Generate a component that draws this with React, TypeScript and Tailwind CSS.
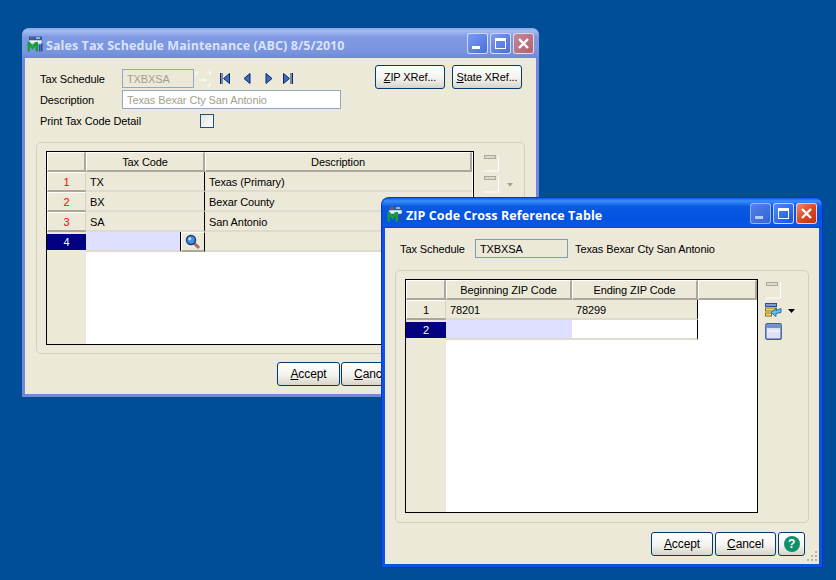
import type { ReactNode } from 'react';

const Btn = ({ hot, rest, w, small }: { hot: string; rest: string; w: string; small?: boolean }) => (
  <div className={`${w} h-[24px] flex items-center justify-center whitespace-pre border border-[#003c74] rounded-[3px] bg-[linear-gradient(#ffffff,#f4f3ee_55%,#d8d4c8)] text-black ${small ? 'text-[11px]' : 'text-[12px]'}`}>
    <span className="underline">{hot}</span>
    {rest}
  </div>
);

const CaptionBtn = ({ kind, active }: { kind: 'min' | 'max' | 'close'; active: boolean }) => {
  const bg =
    kind === 'close'
      ? active
        ? 'bg-[linear-gradient(135deg,#ec8a6c,#d8471e_55%,#c03410)]'
        : 'bg-[linear-gradient(135deg,#c08a9c,#b4606c)]'
      : kind === 'min' && active
        ? 'bg-[linear-gradient(135deg,#6e92e8,#4a6cd4)] opacity-70'
        : active
          ? 'bg-[linear-gradient(135deg,#4f8cf5,#1a54dc)]'
          : 'bg-[linear-gradient(135deg,#7a9cf0,#4a6edc)]';
  return (
    <div className={`w-[21px] h-[21px] rounded-[3px] border border-white/70 flex items-center justify-center ${bg}`}>
      {kind === 'min' && <div className="w-[8px] h-[3px] mt-[8px] mr-[3px] bg-white" />}
      {kind === 'max' && <div className="w-[11px] h-[11px] border border-white border-t-[3px]" />}
      {kind === 'close' && (
        <svg width="13" height="13" viewBox="0 0 13 13">
          <path d="M2 2l9 9M11 2l-9 9" stroke="#fff" strokeWidth="2.4" />
        </svg>
      )}
    </div>
  );
};

const AppIcon = () => (
  <svg width="16" height="16" viewBox="0 0 16 16" className="shrink-0 mt-[1px]">
    <rect x="2" y="0.5" width="13" height="4" fill="#1f5fa8" />
    <rect x="3" y="1.5" width="4" height="1" fill="#d84a3a" />
    <rect x="9" y="1.5" width="4" height="1" fill="#fff" />
    <rect x="2" y="4" width="13" height="4" fill="#e8eef8" stroke="#3a68a8" strokeWidth="0.5" />
    <path d="M0.5 15.5V6h2.500l2.500 4 2.500-4H11v9.500H8.500V10L5.500 14 2.800 10v5.500z" fill="#16a02c" />
    <rect x="12" y="9" width="1.500" height="6.500" fill="#2a4ca0" />
    <rect x="14" y="7.500" width="1.500" height="8" fill="#2a4ca0" />
  </svg>
);

const Window = ({ title, active, pos, children }: { title: string; active: boolean; pos: string; children: ReactNode }) => (
  <div
    className={`absolute ${pos} flex flex-col rounded-t-[7px] ${
      active ? 'bg-[#0a54e0] shadow-[0_0_0_1px_#0831d9]' : 'bg-[#7186dc]'
    }`}
  >
    <div
      className={`h-[30px] flex items-center pl-[5px] pr-[5px] rounded-t-[7px] ${
        active
          ? 'bg-[linear-gradient(#0a5ce8,#3d90f8_10%,#0a5ae4_28%,#0452e0_70%,#0a58e8_92%,#0344c8)]'
          : 'bg-[linear-gradient(#8aa4e8,#a4bcf0_10%,#7f9ae2_30%,#7a94e0_80%,#6e88d8)]'
      }`}
    >
      <AppIcon />
      <span
        className={`ml-[3px] pt-[6px] text-[12.5px] tracking-[0.08px] font-bold font-['Open_Sans',sans-serif] ${
          active ? 'text-white' : 'text-[#d8e4f8]'
        }`}
      >
        {title}
      </span>
      <div className="ml-auto flex gap-[2px]">
        <CaptionBtn kind="min" active={active} />
        <CaptionBtn kind="max" active={active} />
        <CaptionBtn kind="close" active={active} />
      </div>
    </div>
    <div className="mx-[3px] mb-[3px] flex-1 bg-[#ece9d8] relative flex flex-col">{children}</div>
  </div>
);

const Nav = ({ d, cls = '' }: { d: string; cls?: string }) => (
  <svg width="12" height="13" viewBox="0 0 12 13" className={cls}>
    <path d={d} fill="#3a6cc0" stroke="#0a2a6c" strokeWidth="1" />
  </svg>
);

const HeadCell = ({ w, children }: { w: string; children?: ReactNode }) => (
  <div className={`${w} h-[20px] pt-[1px] shrink-0 flex items-center justify-center bg-[#ece9d8] border-t border-l border-t-white border-l-white border-b-2 border-r-2 border-b-[#aca899] border-r-[#aca899]`}>
    {children}
  </div>
);

const RowNo = ({ n, red, cur }: { n: number; red?: boolean; cur?: boolean }) => (
  <div
    className={`h-[20px] pt-[1px] flex items-center justify-center ${
      cur
        ? 'bg-[#000080] text-white border-2 border-[#ece9d8] border-r-0 border-l-0'
        : `bg-[#ece9d8] border-t border-l border-white border-b-2 border-b-[#aca899] border-r border-r-[#d6d2c2] ${red ? 'text-[#ff0000]' : 'text-black'}`
    }`}
  >
    {n}
  </div>
);

const Cell = ({ w, bg = 'bg-[#ece9d8]', line, children }: { w: string; bg?: string; line?: boolean; children?: ReactNode }) => (
  <div className={`${w} h-[20px] shrink-0 flex items-center pl-[4px] pt-[2px] ${bg} border-b-2 border-b-[#dedbcf] ${line ? 'border-r border-r-black' : ''}`}>
    {children}
  </div>
);

const Disabled = () => (
  <svg width="17" height="17" viewBox="0 0 17 17">
    <rect x="1.500" y="0.500" width="11" height="3" fill="#dcd9cc" stroke="#aca899" />
    <path d="M15.500 1v15H1" fill="none" stroke="#fff" strokeWidth="1" />
  </svg>
);

const Lookup = () => (
  <svg width="16" height="16" viewBox="0 0 16 16">
    <path d="M9 9l5 5" stroke="#a06a70" strokeWidth="3" />
    <circle cx="6" cy="6" r="4.500" fill="#4a90e0" stroke="#123a80" strokeWidth="1.400" />
    <circle cx="4.800" cy="4.800" r="1.500" fill="#bfe0ff" />
  </svg>
);

const Group = ({ cls, children }: { cls: string; children: ReactNode }) => (
  <div className={`${cls} border border-[#d0d0bf] rounded-[5px] flex items-start`}>{children}</div>
);

export default function App() {
  return (
    <div className="relative w-[836px] h-[580px] overflow-hidden bg-[#004e98] text-[11px] tracking-[-0.1px] leading-none text-black font-['Liberation_Sans',sans-serif]">
      <Window title="Sales Tax Schedule Maintenance (ABC) 8/5/2010" active={false} pos="left-[22px] top-[28px] w-[517px] h-[369px]">
        <div className="h-[84px] flex items-start">
          <div className="ml-[15px] mt-[11px] flex flex-col gap-[2px]">
            <div className="flex items-center h-[19px]">
              <span className="w-[82px] pt-[1px]">Tax Schedule</span>
              <div className="w-[72px] h-[19px] flex items-center pl-[4px] pt-[1px] bg-[#ece9d8] border border-[#8fa8c4] text-[#a3a08f]">TXBXSA</div>
              <svg width="16" height="16" viewBox="0 0 16 16" className="ml-[1px]">
                <path d="M1 4V1h3M12 1h3v3M15 12v3h-3M9 7v4M4 9h8" fill="none" stroke="#fff" strokeWidth="1" />
              </svg>
              <div className="ml-[8px] flex gap-[10px]">
                <Nav d="M1.500 1v11M3 1v11M10.500 1.500L4.500 6.500l6 5z" />
                <Nav d="M9 1.500L3 6.500l6 5z" />
                <Nav d="M3 1.500l6 5-6 5z" />
                <Nav d="M10.500 1v11M9 1v11M1.500 1.500l6 5-6 5z" cls="-ml-[3px]" />
              </div>
            </div>
            <div className="flex items-center h-[19px]">
              <span className="w-[82px] pt-[1px]">Description</span>
              <div className="w-[219px] h-[19px] flex items-center pl-[4px] pt-[1px] bg-white border border-[#8fa8c4] text-[#a3a08f]">Texas Bexar Cty San Antonio</div>
            </div>
            <div className="flex items-center h-[19px]">
              <span className="w-[160px] pt-[1px]">Print Tax Code Detail</span>
              <div className="w-[14px] h-[14px] border border-[#1c5180] bg-[linear-gradient(135deg,#e4e2da,#ffffff)]" />
            </div>
          </div>
          <div className="ml-auto mr-[14px] mt-[7px] flex gap-[7px]">
            <Btn w="w-[70px]" hot="Z" rest="IP XRef..." small />
            <Btn w="w-[70px]" hot="S" rest="tate XRef..." small />
          </div>
        </div>
        <Group cls="ml-[11px] mr-[11px] h-[212px] pl-[9px] pt-[8px]">
          <div className="w-[428px] h-[194px] border border-black bg-white flex">
            <div className="w-[39px] shrink-0 bg-[#ece9d8]">
              <HeadCell w="w-[39px]" />
              <RowNo n={1} red />
              <RowNo n={2} red />
              <RowNo n={3} red />
              <RowNo n={4} cur />
            </div>
            <div className="flex-1">
              <div className="flex">
                <HeadCell w="w-[119px]">Tax Code</HeadCell>
                <HeadCell w="w-[267px]">Description</HeadCell>
              </div>
              {['TX|Texas (Primary)', 'BX|Bexar County', 'SA|San Antonio'].map(r => (
                <div className="flex" key={r}>
                  <Cell w="w-[119px]" line>{r.split('|')[0]}</Cell>
                  <Cell w="w-[267px]">{r.split('|')[1]}</Cell>
                </div>
              ))}
              <div className="flex">
                <Cell w="w-[95px]" bg="bg-[#dfe0ff]" line />
                <div className="w-[24px] h-[20px] shrink-0 flex items-center justify-center bg-[#ece9d8] border-t border-l border-white border-b-2 border-r border-b-[#aca899] border-r-black">
                  <Lookup />
                </div>
                <Cell w="w-[267px]" />
              </div>
            </div>
          </div>
          <div className="ml-[9px] mt-[4px] flex flex-col gap-[4px]">
            <Disabled />
            <div className="flex items-center">
              <Disabled />
              <svg width="6" height="4" viewBox="0 0 6 4" className="ml-[7px]">
                <path d="M0 0h6L3 3.500z" fill="#a3a08f" />
              </svg>
            </div>
          </div>
        </Group>
        <div className="ml-[252px] mt-[8px] flex gap-[1px]">
          <Btn w="w-[63px]" hot="A" rest="ccept" />
          <Btn w="w-[63px]" hot="C" rest="ancel" />
        </div>
      </Window>

      <Window title="ZIP Code Cross Reference Table" active pos="left-[382px] top-[198px] w-[440px] h-[369px]">
        <div className="h-[42px] flex items-start pt-[11px] pl-[15px]">
          <div className="flex items-center h-[19px]">
            <span className="w-[75px] pt-[1px]">Tax Schedule</span>
            <div className="w-[93px] h-[19px] flex items-center pl-[4px] pt-[1px] bg-[#ece9d8] border border-[#7f9db9]">TXBXSA</div>
            <span className="ml-[7px] pt-[1px]">Texas Bexar Cty San Antonio</span>
          </div>
        </div>
        <Group cls="ml-[10px] w-[414px] h-[253px] pl-[9px] pt-[8px]">
          <div className="w-[353px] h-[234px] border border-black bg-white flex">
            <div className="w-[40px] shrink-0 bg-[#ece9d8]">
              <HeadCell w="w-[40px]" />
              <RowNo n={1} />
              <RowNo n={2} cur />
            </div>
            <div className="flex-1">
              <div className="flex">
                <HeadCell w="w-[126px]">Beginning ZIP Code</HeadCell>
                <HeadCell w="w-[126px]">Ending ZIP Code</HeadCell>
                <HeadCell w="w-[59px]" />
              </div>
              <div className="flex">
                <Cell w="w-[126px]">78201</Cell>
                <Cell w="w-[126px]" line>78299</Cell>
              </div>
              <div className="flex">
                <Cell w="w-[126px]" bg="bg-[#dfe0ff]" />
                <Cell w="w-[126px]" bg="bg-white" line />
              </div>
            </div>
          </div>
          <div className="ml-[7px] mt-[3px] flex flex-col gap-[4px]">
            <Disabled />
            <div className="flex items-center">
              <svg width="17" height="16" viewBox="0 0 17 16">
                <rect x="0.500" y="0.500" width="11" height="3" fill="#7f9be0" stroke="#2f4c98" />
                <rect x="0.500" y="5" width="11" height="3" fill="#f4d860" stroke="#8a7420" />
                <rect x="0.500" y="10" width="6" height="3" fill="#f4d860" stroke="#8a7420" />
                <path d="M16 5.500v4l-5 1v3l-5-4 5-4v2z" fill="#5cc0f0" stroke="#0f5a9c" strokeWidth="0.800" />
              </svg>
              <svg width="7" height="4" viewBox="0 0 7 4" className="ml-[6px]">
                <path d="M0 0h7L3.500 4z" fill="#000" />
              </svg>
            </div>
            <svg width="17" height="17" viewBox="0 0 17 17">
              <rect x="0.800" y="0.800" width="15.400" height="15.400" rx="1.500" fill="#e0e0f4" stroke="#3a5ca8" strokeWidth="1.400" />
              <rect x="1.500" y="1.500" width="14" height="3.500" fill="#6f8fdc" />
              <path d="M2 8h13" stroke="#fff" />
            </svg>
          </div>
        </Group>
        <div className="ml-[266px] mt-[9px] flex gap-[2px]">
          <Btn w="w-[62px]" hot="A" rest="ccept" />
          <Btn w="w-[61px]" hot="C" rest="ancel" />
          <div className="w-[27px] h-[24px] flex items-center justify-center border border-[#003c74] rounded-[3px] bg-[linear-gradient(#ffffff,#f4f3ee_55%,#d8d4c8)]">
            <div className="w-[16px] h-[16px] rounded-full bg-[#12906c] text-white text-[12px] font-bold flex items-center justify-center">?</div>
          </div>
        </div>
        <svg width="11" height="11" viewBox="0 0 11 11" className="absolute right-[1px] bottom-[2px]">
          <path d="M8 0h2v2H8zM4 4h2v2H4zM8 4h2v2H8zM0 8h2v2H0zM4 8h2v2H4zM8 8h2v2H8z" fill="#b8b4a4" />
        </svg>
      </Window>
    </div>
  );
}
